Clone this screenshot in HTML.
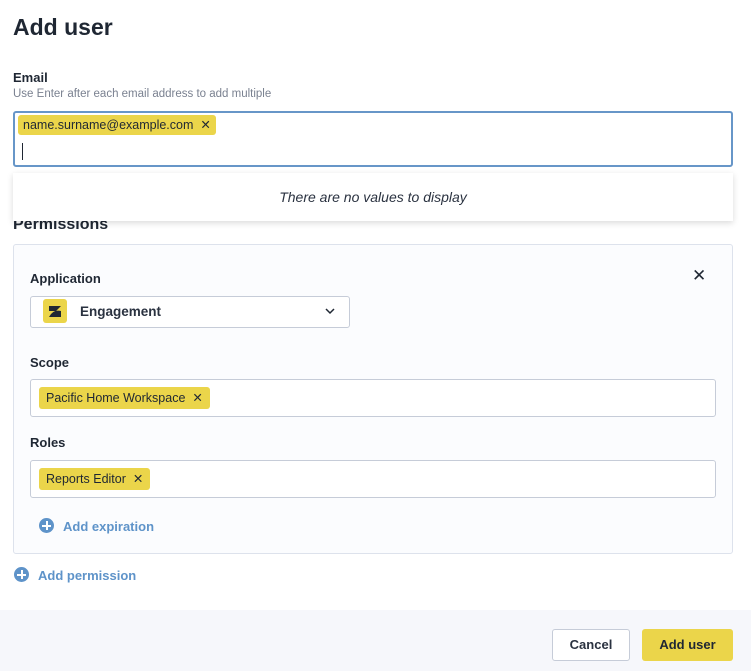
<!DOCTYPE html>
<html><head><style>
*{box-sizing:border-box;margin:0;padding:0}
body{width:751px;height:671px;background:#fff;font-family:"Liberation Sans",sans-serif;color:#1f2733;position:relative;overflow:hidden}
.abs{position:absolute}
.tag{position:absolute;background:#ebd54a;border-radius:3px;font-size:12.5px;color:#1f2733;height:22px;line-height:22px;padding:0 7px}
.lbl{position:absolute;font-size:13px;font-weight:bold;color:#1f2733}
.box{position:absolute;border:1px solid #c6ccd8;border-radius:3px;background:#fff}
.link{position:absolute;font-size:13px;font-weight:bold;color:#5e93c9}
.plus{position:absolute;width:15px;height:15px;border-radius:50%;background:#5e93c9;color:#fff}
.plus:before{content:"";position:absolute;left:3px;top:6.5px;width:9px;height:2px;background:#fff}
.plus:after{content:"";position:absolute;left:6.5px;top:3px;width:2px;height:9px;background:#fff}
</style></head><body>
<div class="abs" style="left:13px;top:14px;font-size:23px;font-weight:bold">Add user</div>
<div class="lbl" style="left:13px;top:70px">Email</div>
<div class="abs" style="left:13px;top:88px;font-size:11.5px;color:#7a8190">Use Enter after each email address to add multiple</div>
<div class="abs" style="left:13px;top:111px;width:720px;height:56px;border:2px solid #6796c8;border-radius:3px"></div>
<div class="tag" style="left:18px;top:115px;height:20px;line-height:20px;padding:0 5px">name.surname@example.com &nbsp;✕</div>
<div class="abs" style="left:22px;top:143px;width:1px;height:17px;background:#1f2733"></div>
<div class="abs" style="left:13px;top:216px;font-size:16px;font-weight:bold">Permissions</div>
<div class="abs" style="left:13px;top:173px;width:720px;height:48px;background:#fff;box-shadow:0 2px 6px rgba(0,0,0,.15);text-align:center;line-height:48px;font-size:14px;font-style:italic;color:#2a3240">There are no values to display</div>
<div class="abs" style="left:13px;top:244px;width:720px;height:310px;background:#fbfcfe;border:1px solid #dde2ec;border-radius:3px"></div>
<div class="lbl" style="left:30px;top:271px">Application</div>
<div class="abs" style="left:692px;top:266px;font-size:17px;color:#1f2733">✕</div>
<div class="box" style="left:30px;top:296px;width:320px;height:32px"></div>
<div class="abs" style="left:43px;top:299px;width:24px;height:24px;background:#ebd54a;border-radius:3px"><svg width="24" height="24"><path d="M6 7h12l-5 5H6z M6 18 Q10 10 18 12 V18z" fill="#1f2733"/></svg></div>
<div class="abs" style="left:80px;top:304px;font-size:13.5px;font-weight:bold;color:#2a3240">Engagement</div>
<svg class="abs" style="left:325px;top:308px" width="10" height="7"><path d="M1 1l4 4 4-4" stroke="#1f2733" stroke-width="1.5" fill="none"/></svg>
<div class="lbl" style="left:30px;top:355px">Scope</div>
<div class="box" style="left:30px;top:379px;width:686px;height:38px"></div>
<div class="tag" style="left:39px;top:387px">Pacific Home Workspace &nbsp;✕</div>
<div class="lbl" style="left:30px;top:435px">Roles</div>
<div class="box" style="left:30px;top:460px;width:686px;height:38px"></div>
<div class="tag" style="left:39px;top:468px">Reports Editor &nbsp;✕</div>
<div class="plus" style="left:39px;top:518px"></div>
<div class="link" style="left:63px;top:519px">Add expiration</div>
<div class="plus" style="left:14px;top:567px"></div>
<div class="link" style="left:38px;top:568px">Add permission</div>
<div class="abs" style="left:0;top:610px;width:751px;height:61px;background:#f6f7fb"></div>
<div class="abs" style="left:552px;top:629px;width:78px;height:32px;border:1px solid #c6ccd8;border-radius:3px;background:#fff;text-align:center;line-height:30px;font-size:13px;font-weight:bold;color:#2a3240">Cancel</div>
<div class="abs" style="left:642px;top:629px;width:91px;height:32px;border-radius:3px;background:#ebd54a;text-align:center;line-height:32px;font-size:13px;font-weight:bold;color:#1f2733">Add user</div>
</body></html>
